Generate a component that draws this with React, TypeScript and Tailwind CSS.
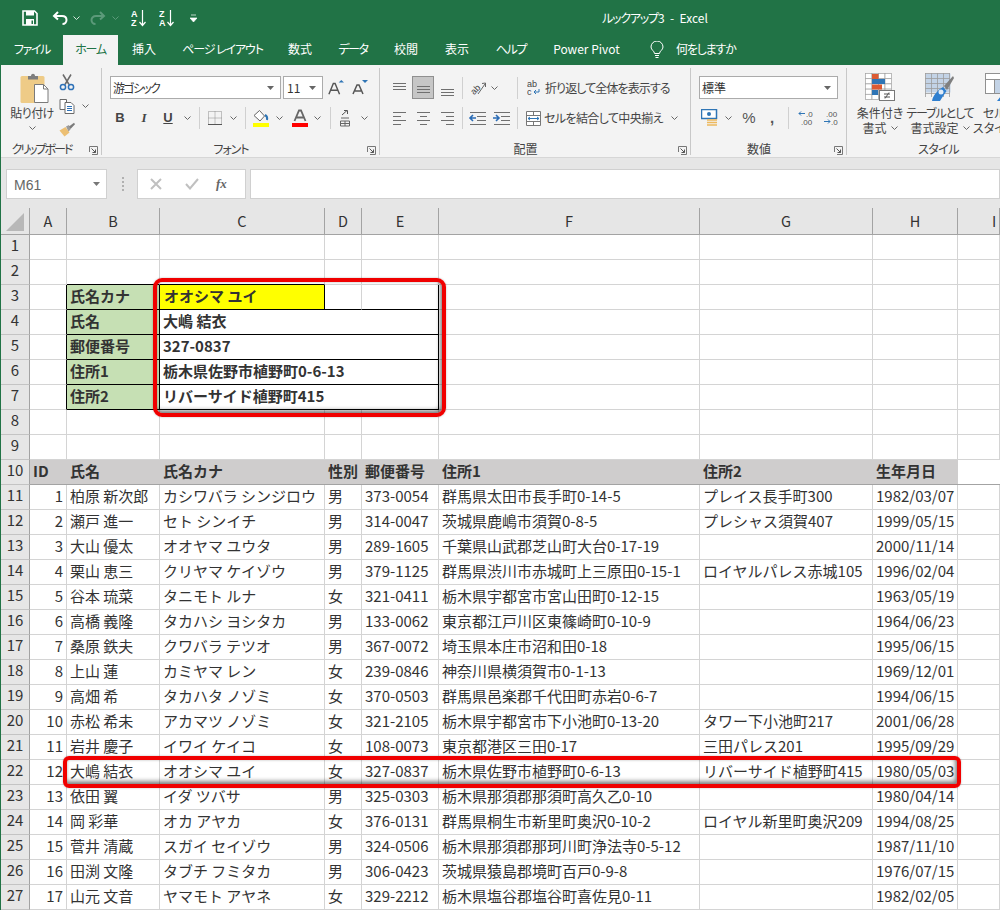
import React from "react";

type Row = [string, string, string, string, string, string, string];
const rows: Row[] = [
  ["柏原 新次郎", "カシワバラ シンジロウ", "男", "373-0054", "群馬県太田市長手町0-14-5", "プレイス長手町300", "1982/03/07"],
  ["瀬戸 進一", "セト シンイチ", "男", "314-0047", "茨城県鹿嶋市須賀0-8-5", "プレシャス須賀407", "1999/05/15"],
  ["大山 優太", "オオヤマ ユウタ", "男", "289-1605", "千葉県山武郡芝山町大台0-17-19", "", "2000/11/14"],
  ["栗山 恵三", "クリヤマ ケイゾウ", "男", "379-1125", "群馬県渋川市赤城町上三原田0-15-1", "ロイヤルパレス赤城105", "1996/02/04"],
  ["谷本 琉菜", "タニモト ルナ", "女", "321-0411", "栃木県宇都宮市宮山田町0-12-15", "", "1963/05/19"],
  ["高橋 義隆", "タカハシ ヨシタカ", "男", "133-0062", "東京都江戸川区東篠崎町0-10-9", "", "1964/06/23"],
  ["桑原 鉄夫", "クワバラ テツオ", "男", "367-0072", "埼玉県本庄市沼和田0-18", "", "1995/06/15"],
  ["上山 蓮", "カミヤマ レン", "女", "239-0846", "神奈川県横須賀市0-1-13", "", "1969/12/01"],
  ["高畑 希", "タカハタ ノゾミ", "女", "370-0503", "群馬県邑楽郡千代田町赤岩0-6-7", "", "1994/06/15"],
  ["赤松 希未", "アカマツ ノゾミ", "女", "321-2105", "栃木県宇都宮市下小池町0-13-20", "タワー下小池町217", "2001/06/28"],
  ["岩井 慶子", "イワイ ケイコ", "女", "108-0073", "東京都港区三田0-17", "三田パレス201", "1995/09/29"],
  ["大嶋 結衣", "オオシマ ユイ", "女", "327-0837", "栃木県佐野市植野町0-6-13", "リバーサイド植野町415", "1980/05/03"],
  ["依田 翼", "イダ ツバサ", "男", "325-0303", "栃木県那須郡那須町高久乙0-10", "", "1980/04/14"],
  ["岡 彩華", "オカ アヤカ", "女", "376-0131", "群馬県桐生市新里町奥沢0-10-2", "ロイヤル新里町奥沢209", "1994/08/25"],
  ["菅井 清蔵", "スガイ セイゾウ", "男", "324-0506", "栃木県那須郡那珂川町浄法寺0-5-12", "", "1987/11/10"],
  ["田渕 文隆", "タブチ フミタカ", "男", "306-0423", "茨城県猿島郡境町百戸0-9-8", "", "1976/07/15"],
  ["山元 文音", "ヤマモト アヤネ", "女", "329-2212", "栃木県塩谷郡塩谷町喜佐見0-11", "", "1982/02/05"],
];

const Chev = ({ className = "", color = "#666" }: { className?: string; color?: string }) => (
  <svg width="7" height="4" viewBox="0 0 7 4" className={"shrink-0 " + className}>
    <path d="M0.5 0.5L3.5 3.5L6.5 0.5" fill="none" stroke={color} strokeWidth="1" />
  </svg>
);
const Slot = ({ w, ml, children }: { w: string; ml?: string; children: React.ReactNode }) => (
  <div className={"flex items-center justify-center shrink-0 h-full " + w + " " + (ml ?? "")}>{children}</div>
);
const Sep = ({ className = "" }: { className?: string }) => (
  <div className={"w-px h-[22px] bg-[#d0d0d0] shrink-0 " + className} />
);
const Launcher = () => (
  <svg width="9" height="9" viewBox="0 0 9 9" className="shrink-0">
    <path d="M0.5 6V0.5H8.5V8.5H3" fill="none" stroke="#777" />
    <path d="M2.5 2.5L6.5 6.5M6.5 3.5V6.5H3.5" fill="none" stroke="#555" />
  </svg>
);
const Footer = ({ label, launcher = true, labelClass = "" }: { label: string; launcher?: boolean; labelClass?: string }) => (
  <div className="grid grid-cols-[1fr_auto_1fr] items-center h-[16px] mb-[-2px] pr-[3px]">
    <span />
    <span className={"text-[12px] leading-[16px] text-[#444] whitespace-nowrap " + labelClass}>{label}</span>
    <span className="flex justify-end pt-[3px]">{launcher && <Launcher />}</span>
  </div>
);
const Lines = ({ kind }: { kind: "t" | "m" | "b" | "l" | "c" | "r" }) => {
  const s = "#6f6f6f";
  const y = kind === "t" ? [4, 7, 10] : kind === "m" ? [7, 10, 13] : kind === "b" ? [10, 13, 16] : [3, 7, 11, 15];
  const seg = (i: number): [number, number] => {
    if (kind === "l") return i % 2 ? [2, 10] : [2, 15];
    if (kind === "c") return i % 2 ? [5, 12] : [2, 15];
    if (kind === "r") return i % 2 ? [7, 15] : [2, 15];
    return [2, 15];
  };
  return (
    <svg width="17" height="18" viewBox="0 0 17 18" className="shrink-0">
      {y.map((v, i) => {
        const [a, b] = seg(i);
        return <path key={i} d={`M${a} ${v + 0.5}H${b}`} stroke={s} />;
      })}
    </svg>
  );
};
const Indent = ({ dir }: { dir: "l" | "r" }) => (
  <svg width="20" height="16" viewBox="0 0 20 16" className="shrink-0">
    {[2, 6, 10, 14].map((y, i) => (
      <path key={y} d={`M${i === 0 || i === 3 ? 2 : 9} ${y + 0.5}H18`} stroke="#707070" />
    ))}
    {dir === "l" ? (
      <path d="M8 8H2M5 5L2 8L5 11" fill="none" stroke="#2b6cb5" strokeWidth="1.6" />
    ) : (
      <path d="M1 8H7M4 5L7 8L4 11" fill="none" stroke="#2b6cb5" strokeWidth="1.6" />
    )}
  </svg>
);

function IconSave() {
  return (
    <svg width="16" height="16" viewBox="0 0 16 16">
      <path d="M1 1H12.5L15 3.5V15H1Z" fill="none" stroke="#fff" strokeWidth="1.6" />
      <rect x="4" y="1" width="8" height="4.5" fill="#fff" />
      <rect x="4" y="9" width="8" height="6" fill="#fff" />
      <rect x="9.5" y="10.5" width="1.5" height="3.5" fill="#217346" />
    </svg>
  );
}
function IconUndo({ color }: { color: string }) {
  return (
    <svg width="16" height="14" viewBox="0 0 16 14">
      <path d="M6 1L2 5L6 8.5" fill="none" stroke={color} strokeWidth="2" />
      <path d="M2.5 5H10C12.8 5 14.5 6.8 14.5 9C14.5 11 13 13 10.5 13" fill="none" stroke={color} strokeWidth="2" />
    </svg>
  );
}
function IconRedo({ color }: { color: string }) {
  return (
    <svg width="16" height="14" viewBox="0 0 16 14">
      <path d="M10 1L14 5L10 8.5" fill="none" stroke={color} strokeWidth="2" />
      <path d="M13.5 5H6C3.2 5 1.5 6.8 1.5 9C1.5 11 3 13 5.5 13" fill="none" stroke={color} strokeWidth="2" />
    </svg>
  );
}
function IconSort({ top, bottom }: { top: string; bottom: string }) {
  return (
    <svg width="16" height="18" viewBox="0 0 16 18">
      <text x="0" y="8" fontSize="9" fontWeight="700" fill="#fff" fontFamily="Liberation Sans">{top}</text>
      <text x="0" y="17" fontSize="9" fontWeight="700" fill="#fff" fontFamily="Liberation Sans">{bottom}</text>
      <path d="M11.5 1V16M8.5 13L11.5 16.5L14.5 13" fill="none" stroke="#fff" strokeWidth="1.2" />
    </svg>
  );
}
function IconPaste() {
  return (
    <svg width="29" height="31" viewBox="0 0 29 31" className="shrink-0">
      <rect x="0.5" y="4" width="24" height="27" rx="1.5" fill="#eecb87" />
      <path d="M8 4H11C11 1 15 1 15 4H18V7.5H8Z" fill="#7d7d7d" />
      <path d="M14.5 12.5H23.5L28 17V30.5H14.5Z" fill="#fff" stroke="#7a7a7a" />
      <path d="M23.5 12.5V17H28" fill="none" stroke="#7a7a7a" />
    </svg>
  );
}
function IconCut() {
  return (
    <svg width="16" height="17" viewBox="0 0 16 17" className="shrink-0">
      <path d="M4 0.5L10 10.5M12 0.5L6 10.5" stroke="#6a6a6a" strokeWidth="1.5" fill="none" />
      <circle cx="4" cy="13" r="2.6" fill="none" stroke="#2d71b8" strokeWidth="1.5" />
      <circle cx="12" cy="13" r="2.6" fill="none" stroke="#2d71b8" strokeWidth="1.5" />
    </svg>
  );
}
function IconCopy() {
  return (
    <svg width="16" height="15" viewBox="0 0 16 15" className="shrink-0">
      <path d="M1 .5H7.5V10.5H1Z" fill="#fff" stroke="#6a6a6a" />
      <path d="M6 3.5H12L15 6.5V14.5H6Z" fill="#fff" stroke="#6a6a6a" />
      <path d="M8 7.5H13M8 9.5H13M8 11.5H13" stroke="#2d71b8" />
    </svg>
  );
}
function IconBrush() {
  return (
    <svg width="17" height="15" viewBox="0 0 17 15" className="shrink-0">
      <path d="M0.5 8.5L6.5 5L10.5 10.5L5.5 14.5Z" fill="#ecbf73" />
      <path d="M7 4.5L10 3L11.5 7.5L9.5 9.5Z" fill="#9a9a9a" />
      <path d="M10 4.5L15 .8L16 2.2L11.5 7Z" fill="#7a7a7a" />
    </svg>
  );
}
function IconCond() {
  const cells = [];
  for (let y = 0; y < 5; y++) for (let x = 0; x < 4; x++) cells.push(<rect key={`${x}-${y}`} x={x * 6.5 + 0.5} y={y * 5.2 + 0.5} width="6.5" height="5.2" fill="#fff" stroke="#a0a0a0" strokeWidth=".7" />);
  return (
    <svg width="30" height="28" viewBox="0 0 30 28" className="shrink-0">
      {cells}
      <rect x="7" y="1" width="6.5" height="5" fill="#dc5a32" />
      <rect x="7" y="6" width="13" height="5" fill="#2f75b5" />
      <rect x="7" y="11.5" width="10" height="5" fill="#dc5a32" />
      <rect x="7" y="17" width="6" height="5" fill="#2f75b5" />
      <rect x="14.5" y="17.5" width="15" height="10" fill="#fff" stroke="#777" />
      <path d="M19 21H25M19 24H25M24 19.5L20 25.5" stroke="#555" fill="none" />
    </svg>
  );
}
function IconTable() {
  const v = [0, 6, 12, 18, 24];
  return (
    <svg width="30" height="28" viewBox="0 0 30 28" className="shrink-0">
      <rect x="0.5" y="0.5" width="25" height="19" fill="#c3d3e6" />
      {v.map((x) => <path key={x} d={`M${x + 0.5} 0V24`} stroke="#9c9c9c" strokeWidth=".8" />)}
      {[0, 5, 10, 15, 20].map((y) => <path key={y} d={`M0 ${y + 0.5}H25`} stroke="#9c9c9c" strokeWidth=".8" />)}
      <path d="M19 13L28 3L29 5L22 17Z" fill="#7f7f7f" />
      <path d="M7 28C8 22 13 17 18 14L21.5 18C19 22 16 26 15 28Z" fill="#2f7fcf" />
      <circle cx="16" cy="19" r="2.5" fill="#fff" opacity=".85" />
    </svg>
  );
}
function IconCellStyle() {
  return (
    <svg width="30" height="28" viewBox="0 0 30 28" className="shrink-0">
      <rect x="0.5" y="0.5" width="29" height="6" fill="#fff" stroke="#909090" />
      <rect x="0.5" y="6.5" width="9" height="14" fill="#fff" stroke="#909090" />
      <rect x="9.5" y="6.5" width="20" height="14" fill="#c3d3e6" stroke="#909090" />
      <path d="M12 28L20 18L27 28Z" fill="#2f7fcf" />
    </svg>
  );
}

const Combo = ({ w, text, textClass = "" }: { w: string; text: string; textClass?: string }) => (
  <div className={"h-[23px] bg-white border border-[#ababab] flex items-center justify-between pl-[2px] pr-[6px] shrink-0 " + w}>
    <span className={"text-[12px] text-[#333] " + textClass}>{text}</span>
    <svg width="7" height="4" viewBox="0 0 7 4" className="shrink-0"><path d="M0 0H7L3.5 4Z" fill="#666" /></svg>
  </div>
);

const tabs: [string, string][] = [
  ["ファイル", "w-[62px] tracking-[-1.4px]"],
  ["ホーム", "w-[55px] tracking-[-1.2px]"],
  ["挿入", "w-[52px]"],
  ["ページ レイアウト", "w-[105px] tracking-[-1.1px]"],
  ["数式", "w-[50px]"],
  ["データ", "w-[56px] tracking-[-1.4px]"],
  ["校閲", "w-[50px]"],
  ["表示", "w-[52px]"],
  ["ヘルプ", "w-[56px] tracking-[-1.2px]"],
  ["Power Pivot", "w-[95px]"],
];

const head = (t: string, align = "justify-center", extra = "") => (
  <div className={"flex items-center h-full bg-[#e6e6e6] border-r border-b border-[#a3a3a3] text-[14.5px] text-[#333] " + align + " " + extra}>{t}</div>
);

const grid = "border-r border-b border-[#d4d4d4]";
const cellBase = "flex items-center overflow-hidden whitespace-nowrap text-[15px] leading-none text-[#333] px-[3px] pb-[4px] ";
const Blank = ({ className = grid }: { className?: string }) => <div className={className} />;
const RowHead = ({ n }: { n: number }) => (
  <div className="flex items-center justify-center bg-[#e6e6e6] border-r border-b border-r-[#a3a3a3] border-b-[#c4c4c4] text-[15px] text-[#333] pb-[3px]">{n}</div>
);

const formLabels = ["氏名カナ", "氏名", "郵便番号", "住所1", "住所2"];
const formValues = ["オオシマ ユイ", "大嶋 結衣", "327-0837", "栃木県佐野市植野町0-6-13", "リバーサイド植野町415"];
const tableHead = ["ID", "氏名", "氏名カナ", "性別", "郵便番号", "住所1", "住所2", "生年月日"];
const frameShadow = "shadow-[0_0_2px_rgba(0,0,0,0.3),inset_-2px_-3px_4px_rgba(0,0,0,0.45),inset_0_0_3px_rgba(0,0,0,0.2)]";

export default function App() {
  return (
    <div className="relative w-[1000px] h-[910px] overflow-hidden bg-white [font-family:'Noto_Sans_CJK_JP',sans-serif]">
      <div className="bg-[#217346] text-white [font-feature-settings:'palt']">
        <div className="h-[35px] flex items-center">
          <Slot w="w-[16px]" ml="ml-[22px]"><IconSave /></Slot>
          <Slot w="w-[16px]" ml="ml-[14px]"><IconUndo color="#fff" /></Slot>
          <Slot w="w-[7px]" ml="ml-[5px]"><Chev color="#d5e5dc" /></Slot>
          <Slot w="w-[16px]" ml="ml-[10px]"><IconRedo color="#5c9a7a" /></Slot>
          <Slot w="w-[7px]" ml="ml-[6px]"><Chev color="#5c9a7a" /></Slot>
          <Slot w="w-[16px]" ml="ml-[12px]"><IconSort top="A" bottom="Z" /></Slot>
          <Slot w="w-[16px]" ml="ml-[12px]"><IconSort top="Z" bottom="A" /></Slot>
          <Slot w="w-[7px]" ml="ml-[15px]">
            <svg width="7" height="8" viewBox="0 0 7 8"><path d="M1 1H6M0 4H7L3.5 8Z" fill="#fff" stroke="#fff" strokeWidth=".7" /></svg>
          </Slot>
          <span className="ml-[405px] text-[12px] whitespace-nowrap"><span className="tracking-[-1.2px]">ルックアップ</span>3&nbsp;&nbsp;-&nbsp;&nbsp;Excel</span>
        </div>
        <div className="h-[30px] flex items-stretch pl-px text-[12px]">
          {tabs.map(([t, w]) => (
            <div key={t} className={"flex items-center justify-center whitespace-nowrap pb-[2px] " + w + (t === "ホーム" ? " bg-[#f3f3f3] text-[#217346]" : "")}>{t}</div>
          ))}
          <svg width="14" height="18" viewBox="0 0 14 18" className="ml-[16px] self-center">
            <path d="M4.5 12.5C4.5 10 1 9 1 6A6 6 0 0 1 13 6C13 9 9.5 10 9.5 12.5Z" fill="none" stroke="#fff" />
            <path d="M5 14.5H9M5.5 16.5H8.5" stroke="#fff" />
          </svg>
          <div className="flex items-center ml-[12px] pb-[2px] whitespace-nowrap tracking-[-1.2px]">何をしますか</div>
        </div>
      </div>

      <div className="border-l border-[#217346]">
        <div className="h-[93px] bg-[#f3f3f3] flex overflow-hidden pt-[3px] border-b border-[#d6d6d6] [font-feature-settings:'palt'] text-[#444]">
          {/* clipboard */}
          <div className="w-[101px] shrink-0 border-r border-[#c8c8c8] flex flex-col h-[87px]">
            <div className="flex flex-1 min-h-0">
              <div className="w-[57px] pl-[5px] flex flex-col items-center pt-[4px]">
                <div className="ml-[4px]"><IconPaste /></div>
                <div className="text-[12px] leading-[14px] mt-[3px] whitespace-nowrap tracking-[-0.6px]">貼り付け</div>
                <Chev className="mt-[6px]" />
              </div>
              <div className="flex flex-col pt-[3px]">
                <div className="h-[23px] flex items-center w-[18px] justify-center"><IconCut /></div>
                <div className="h-[24px] flex items-center">
                  <div className="w-[18px] flex justify-center"><IconCopy /></div>
                  <Chev className="ml-[6px]" />
                </div>
                <div className="h-[23px] flex items-center w-[18px] justify-center"><IconBrush /></div>
              </div>
            </div>
            <Footer label="クリップボード" labelClass="tracking-[-2px] -translate-x-[8px]" />
          </div>

          {/* font */}
          <div className="w-[278px] shrink-0 border-r border-[#c8c8c8] flex flex-col h-[87px]">
            <div className="flex-1 min-h-0 pt-[8px]">
              <div className="flex items-center h-[23px] pl-[8px]">
                <Combo w="w-[171px]" text="游ゴシック" textClass="tracking-[-1.7px]" />
                <Combo w="w-[40px] ml-[2px]" text="11" textClass="ml-[1px]" />
                <Slot w="w-[16px]" ml="ml-[5px]">
                  <svg width="18" height="17" viewBox="0 0 18 17"><path d="M1 16L6 4H8L13 16M3.5 11.5H10.5" fill="none" stroke="#555" strokeWidth="1.6" /><path d="M12 3L15 0L18 3Z" fill="#2f75b5" /></svg>
                </Slot>
                <Slot w="w-[16px]" ml="ml-[8px]">
                  <svg width="16" height="15" viewBox="0 0 16 15"><path d="M1 14L5 5H7L11 14M3 11H9" fill="none" stroke="#555" strokeWidth="1.5" /><path d="M10 0H16L13 3Z" fill="#2f75b5" /></svg>
                </Slot>
              </div>
              <div className="flex items-center h-[22px] mt-[8px] pl-[6px]">
                <Slot w="w-[24px]"><span className="text-[13px] font-bold text-[#444] [font-family:'Liberation_Sans',sans-serif]">B</span></Slot>
                <Slot w="w-[24px]"><span className="text-[13px] italic font-bold text-[#444] [font-family:'Liberation_Serif',serif]">I</span></Slot>
                <Slot w="w-[24px]"><span className="text-[13px] font-bold underline text-[#444] [font-family:'Liberation_Sans',sans-serif]">U</span></Slot>
                <Slot w="w-[14px]"><Chev /></Slot>
                <Sep className="ml-[5px]" />
                <Slot w="w-[16px]" ml="ml-[7px]">
                  <svg width="14" height="14" viewBox="0 0 14 14"><path d="M0.5 0.5H13.5V13.5H0.5ZM7 .5V13.5M.5 7H13.5" fill="none" stroke="#8c8c8c" strokeDasharray="1 1" /><path d="M0 13.5H14" stroke="#555" /></svg>
                </Slot>
                <Slot w="w-[14px]" ml="ml-[3px]"><Chev /></Slot>
                <Sep className="ml-[5px]" />
                <Slot w="w-[20px]" ml="ml-[5px]">
                  <svg width="18" height="18" viewBox="0 0 18 18"><path d="M2 6.5L7.5 1.5L12.5 7L8 12Z" fill="#fff" stroke="#666" /><path d="M13 6C15 7 15.5 9 15 11" stroke="#2f75b5" strokeWidth="2" fill="none" /><rect x="1" y="14" width="16" height="4" fill="#ffff00" /></svg>
                </Slot>
                <Slot w="w-[14px]" ml="ml-[1px]"><Chev /></Slot>
                <Slot w="w-[18px]" ml="ml-[5px]">
                  <svg width="16" height="18" viewBox="0 0 16 18"><path d="M2.5 12L7 1.5H9L13.5 12M4.5 8.5H11.5" fill="none" stroke="#666" strokeWidth="1.8" /><rect x="0" y="14" width="16" height="4" fill="#ff0000" /></svg>
                </Slot>
                <Slot w="w-[14px]" ml="ml-[1px]"><Chev /></Slot>
                <Sep className="ml-[6px]" />
                <Slot w="w-[16px]" ml="ml-[6px]">
                  <svg width="12" height="18" viewBox="0 0 12 18"><path d="M3 6L8 1.5M5 1.5H8.5V5" fill="none" stroke="#555" /><path d="M2 9H10M1.5 12H10.5V17H1.5ZM6 12V17M1.5 14.5H10.5" fill="none" stroke="#666" /></svg>
                </Slot>
                <Slot w="w-[14px]" ml="ml-[4px]"><Chev /></Slot>
              </div>
            </div>
            <Footer label="フォント" labelClass="tracking-[-1px] -translate-x-[8px]" />
          </div>

          {/* alignment */}
          <div className="w-[311px] shrink-0 border-r border-[#c8c8c8] flex flex-col h-[87px]">
            <div className="flex-1 min-h-0 pt-[8px]">
              <div className="flex items-center h-[23px] pl-[8px]">
                <Slot w="w-[22px]"><Lines kind="t" /></Slot>
                <div className="w-[22px] h-[23px] ml-[2px] bg-[#c6c6c6] border border-[#8f8f8f] flex items-center justify-center shrink-0"><Lines kind="m" /></div>
                <Slot w="w-[22px]" ml="ml-[2px]"><Lines kind="b" /></Slot>
                <Sep className="ml-[4px]" />
                <Slot w="w-[20px]" ml="ml-[5px]">
                  <svg width="17" height="18" viewBox="0 0 17 18" className="overflow-visible"><text x="0" y="13" fontSize="9" fill="#444" transform="rotate(-45 6 10)" fontFamily="Liberation Sans">ab</text><path d="M8 15L15 5M12 4.5L15.5 4L15.5 8" fill="none" stroke="#666" /></svg>
                </Slot>
                <Slot w="w-[10px]" ml="ml-[1px]"><Chev /></Slot>
                <Sep className="ml-[18px]" />
                <Slot w="w-[16px]" ml="ml-[8px]">
                  <svg width="14" height="17" viewBox="0 0 14 17"><text x="0" y="8" fontSize="9" fill="#444" fontFamily="Liberation Sans">ab</text><text x="0" y="16" fontSize="9" fill="#444" fontFamily="Liberation Sans">c</text><path d="M12 10V13H7M9 11L7 13L9 15" fill="none" stroke="#2f75b5" /></svg>
                </Slot>
                <span className="ml-[3px] text-[12px] whitespace-nowrap tracking-[-0.9px]">折り返して全体を表示する</span>
              </div>
              <div className="flex items-center h-[22px] mt-[8px] pl-[8px]">
                <Slot w="w-[22px]"><Lines kind="l" /></Slot>
                <Slot w="w-[22px]" ml="ml-[2px]"><Lines kind="c" /></Slot>
                <Slot w="w-[22px]" ml="ml-[2px]"><Lines kind="r" /></Slot>
                <Sep className="ml-[4px]" />
                <Slot w="w-[20px]" ml="ml-[5px]"><Indent dir="l" /></Slot>
                <Slot w="w-[20px]" ml="ml-[4px]"><Indent dir="r" /></Slot>
                <Sep className="ml-[5px]" />
                <Slot w="w-[16px]" ml="ml-[7px]">
                  <svg width="15" height="15" viewBox="0 0 15 15"><path d="M.5 .5H14.5V14.5H.5ZM.5 4.5H14.5M.5 10.5H14.5M7.5 .5V4.5M7.5 10.5V14.5" fill="#fff" stroke="#777" /><path d="M2 7.5H13M4 6L2 7.5L4 9M11 6L13 7.5L11 9" fill="none" stroke="#2f75b5" /></svg>
                </Slot>
                <span className="ml-[3px] w-[125px] text-[12px] whitespace-nowrap tracking-[-0.6px]">セルを結合して中央揃え</span>
                <Slot w="w-[10px]"><Chev /></Slot>
              </div>
            </div>
            <Footer label="配置" labelClass="-translate-x-[8px]" />
          </div>

          {/* number */}
          <div className="w-[156px] shrink-0 border-r border-[#c8c8c8] flex flex-col h-[87px]">
            <div className="flex-1 min-h-0 pt-[8px]">
              <div className="flex items-center h-[23px] pl-[8px]">
                <Combo w="w-[139px]" text="標準" />
              </div>
              <div className="flex items-center h-[22px] mt-[8px] pl-[9px]">
                <Slot w="w-[20px]">
                  <svg width="18" height="18" viewBox="0 0 18 18"><rect x=".5" y=".5" width="15" height="9" fill="#fff" stroke="#2f75b5" strokeWidth="1.5" /><circle cx="8" cy="5" r="2" fill="#2f75b5" /><path d="M6 11H16M6 13.5H16M6 16H16" stroke="#edb95e" strokeWidth="1.5" /></svg>
                </Slot>
                <Slot w="w-[10px]" ml="ml-[3px]"><Chev /></Slot>
                <Slot w="w-[16px]" ml="ml-[8px]"><span className="text-[15px] text-[#555] [font-family:'Liberation_Sans',sans-serif]">%</span></Slot>
                <Slot w="w-[10px]" ml="ml-[10px]"><span className="text-[15px] font-bold text-[#555] [font-family:'Liberation_Sans',sans-serif]">,</span></Slot>
                <Sep className="ml-[11px]" />
                <Slot w="w-[18px]" ml="ml-[9px]">
                  <svg width="18" height="16" viewBox="0 0 18 16"><text x="8" y="7" fontSize="8" fill="#555" fontFamily="Liberation Sans">.0</text><text x="3" y="15" fontSize="8" fill="#555" fontFamily="Liberation Sans">.00</text><path d="M7 3.5H1M3 1.5L1 3.5L3 5.5" fill="none" stroke="#2f75b5" /></svg>
                </Slot>
                <Slot w="w-[18px]" ml="ml-[7px]">
                  <svg width="18" height="16" viewBox="0 0 18 16"><text x="3" y="7" fontSize="8" fill="#555" fontFamily="Liberation Sans">.00</text><text x="8" y="15" fontSize="8" fill="#555" fontFamily="Liberation Sans">.0</text><path d="M1 11.5H7M5 9.5L7 11.5L5 13.5" fill="none" stroke="#2f75b5" /></svg>
                </Slot>
              </div>
            </div>
            <Footer label="数値" labelClass="-translate-x-[8px]" />
          </div>

          {/* styles */}
          <div className="w-[186px] shrink-0 flex flex-col h-[87px]">
            <div className="flex-1 min-h-0 flex pl-[3px] pt-[5px]">
              {[
                { icon: <IconCond />, a: "条件付き", b: "書式", t: "" },
                { icon: <IconTable />, a: "テーブルとして", b: "書式設定", t: "tracking-[-1.1px]" },
                { icon: <IconCellStyle />, a: "セルの", b: "スタイル", t: "" },
              ].map((x) => (
                <div key={x.a} className="w-[60px] shrink-0 flex flex-col items-center">
                  {x.icon}
                  <div className={"text-[12px] leading-[15px] mt-[4px] whitespace-nowrap " + x.t}>{x.a}</div>
                  <div className="text-[12px] leading-[15px] whitespace-nowrap flex items-center gap-[4px]">{x.b}<Chev /></div>
                </div>
              ))}
            </div>
            <Footer label="スタイル" launcher={false} labelClass="tracking-[-0.6px]" />
          </div>
        </div>

        {/* formula bar */}
        <div className="h-[50px] bg-[#e6e6e6] pt-[11px]">
          <div className="flex h-[30px]">
            <div className="w-[101px] ml-[5px] bg-white border border-[#d0d0d0] flex items-center justify-between pl-[7px] pr-[6px] text-[14px] text-[#666] [font-family:'Liberation_Sans',sans-serif] shrink-0">
              <span className="pt-[3px]">M61</span>
              <svg width="7" height="4" viewBox="0 0 7 4"><path d="M0 0H7L3.5 4Z" fill="#777" /></svg>
            </div>
            <div className="ml-[15px] flex flex-col justify-center gap-[2px] w-[3px] shrink-0">
              {[0, 1, 2, 3].map((i) => <div key={i} className="h-[2px] w-[2px] bg-[#b0b0b0]" />)}
            </div>
            <div className="ml-[12px] w-[109px] bg-white border border-[#d0d0d0] flex items-center shrink-0">
              <svg width="12" height="12" viewBox="0 0 12 12" className="ml-[12px]"><path d="M1 1L11 11M11 1L1 11" stroke="#c0c0c0" strokeWidth="2" /></svg>
              <svg width="14" height="12" viewBox="0 0 14 12" className="ml-[23px]"><path d="M1 6L5 10.5L13 1" fill="none" stroke="#c0c0c0" strokeWidth="2" /></svg>
              <span className="ml-[17px] text-[13px] font-bold italic text-[#666] [font-family:'Liberation_Serif',serif]">fx</span>
            </div>
            <div className="ml-[4px] flex-1 bg-white border border-[#d0d0d0]" />
          </div>
        </div>

        {/* sheet */}
        <div className="grid grid-cols-[29px_37px_93px_165px_37px_77px_261px_173px_85px_1fr] grid-rows-[27px_repeat(27,25px)]">
          <div className="bg-[#e6e6e6] border-r border-b border-[#a3a3a3] flex items-center justify-center">
            <svg width="18" height="18" viewBox="0 0 18 18" className="mt-[2px]"><path d="M18 0V18H0Z" fill="#b8b8b8" /></svg>
          </div>
          {["A", "B", "C", "D", "E", "F", "G", "H"].map((c) => (
            <React.Fragment key={c}>{head(c)}</React.Fragment>
          ))}
          {head("I", "justify-start", "pl-[34px]")}

          {[1, 2].map((n) => (
            <React.Fragment key={n}>
              <RowHead n={n} />
              <Blank />
              <Blank className={n === 2 ? "border-r border-b border-r-[#d4d4d4] border-b-black" : grid} />
              <Blank className={n === 2 ? "border-r border-b border-r-[#d4d4d4] border-b-black" : grid} />
              <Blank /><Blank /><Blank /><Blank /><Blank /><Blank />
            </React.Fragment>
          ))}

          {formLabels.map((l, i) => (
            <React.Fragment key={l}>
              <RowHead n={i + 3} />
              <div className="border-b border-r border-b-[#d4d4d4] border-r-black" />
              <div className={cellBase + "bg-[#c6e0b4] font-bold border-r border-b border-black text-[#111]"}>{l}</div>
              {i === 0 ? (
                <>
                  <div className={cellBase + "bg-[#ffff00] font-bold border-r border-b border-black text-[#111] pl-[4px]"}>{formValues[i]}</div>
                  <Blank className="border-b border-r border-r-[#d4d4d4] border-b-black" />
                  <Blank className="border-b border-r border-r-black border-b-black" />
                </>
              ) : (
                <div className={cellBase + "col-span-3 font-bold border-r border-b border-black text-[#111]"}>{formValues[i]}</div>
              )}
              <Blank /><Blank /><Blank /><Blank />
            </React.Fragment>
          ))}

          {[8, 9].map((n) => (
            <React.Fragment key={n}>
              <RowHead n={n} />
              {Array.from({ length: 9 }).map((_, i) => <Blank key={i} />)}
            </React.Fragment>
          ))}

          <RowHead n={10} />
          {tableHead.map((t) => (
            <div key={t} className={cellBase + "bg-[#cfcdcd] font-bold border-b border-[#a3a3a3] text-[#111]"}>{t}</div>
          ))}
          <div className="border-b border-[#a3a3a3]" />

          {rows.map((r, i) => (
            <React.Fragment key={i}>
              <RowHead n={i + 11} />
              <div className={cellBase + grid + " justify-end"}>{i + 1}</div>
              {r.map((v, j) => (
                <div key={j} className={cellBase + grid}>{v}</div>
              ))}
              <div className={grid} />
            </React.Fragment>
          ))}
        </div>
      </div>

      {/* highlight frames */}
      <div className={"absolute left-[153px] top-[278px] w-[293px] h-[139px] rounded-[9px] border-[4px] border-[#f00000] " + frameShadow} />
      <div className={"absolute left-[63px] top-[756px] w-[898px] h-[32px] rounded-[6px] border-[4px] border-[#f00000] " + frameShadow} />
    </div>
  );
}
